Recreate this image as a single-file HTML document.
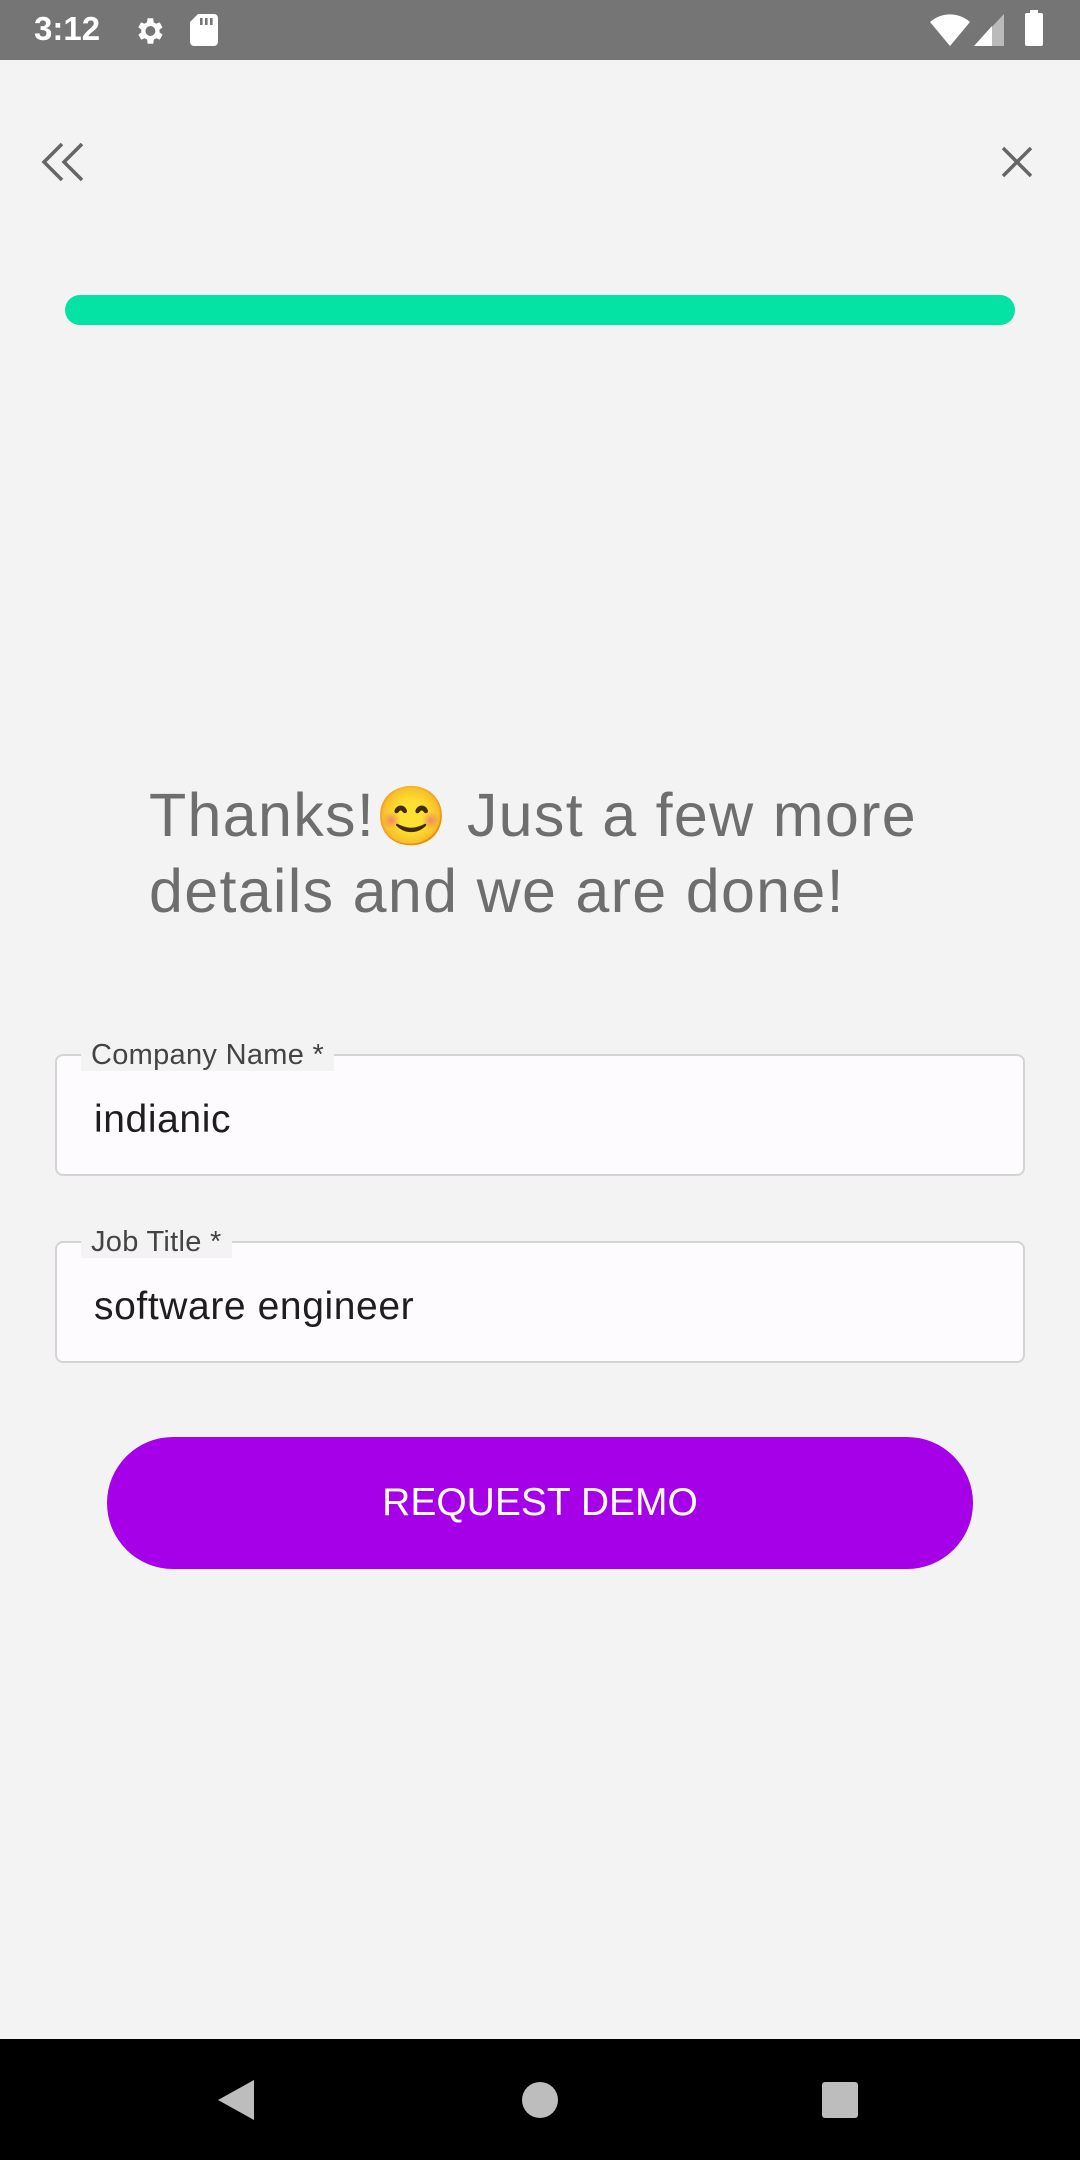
<!DOCTYPE html>
<html><head><meta charset="utf-8"><style>
*{margin:0;padding:0;box-sizing:border-box}
body{width:1080px;height:2160px;background:#f2f3f2;font-family:"Liberation Sans",Roboto,sans-serif;position:relative;overflow:hidden}
.sb{position:absolute;left:0;top:0;width:1080px;height:60px;background:#757575;color:#fff}
.abs{position:absolute}
.field{position:absolute;left:55px;width:970px;height:122px;border:2px solid #d4d4d4;border-radius:8px;background:#fdfbfd}
.lbl{position:absolute;top:-17px;left:24px;padding:0 10px;background:#f2f3f2;font-size:29px;color:#444;line-height:32px;letter-spacing:0.3px}
.val{position:absolute;left:37px;top:42px;font-size:39px;color:#1e1e1e;letter-spacing:0.6px}
</style></head><body>
<div class="sb">
 <div class="abs" style="left:34px;top:10px;font-size:33px;font-weight:bold">3:12</div>
 <svg class="abs" style="left:132px;top:14px" width="34" height="34" viewBox="0 0 24 24"><path fill="#fff" d="M19.4 13a7.5 7.5 0 0 0 0-2l2.1-1.6-2-3.5-2.5 1a7 7 0 0 0-1.7-1L15 3h-4l-.4 2.9a7 7 0 0 0-1.7 1l-2.5-1-2 3.5L6.6 11a7.5 7.5 0 0 0 0 2l-2.1 1.6 2 3.5 2.5-1a7 7 0 0 0 1.7 1L11 21h4l.4-2.9a7 7 0 0 0 1.7-1l2.5 1 2-3.5zM13 15.5a3.5 3.5 0 1 1 0-7 3.5 3.5 0 0 1 0 7z"/></svg>
 <svg class="abs" style="left:190px;top:14px" width="28" height="32" viewBox="0 0 14 16"><path fill="#fff" d="M4 0h8a2 2 0 0 1 2 2v12a2 2 0 0 1-2 2H2a2 2 0 0 1-2-2V4z"/><path fill="#757575" d="M5 2h1.3v3.5H5zM7.5 2h1.3v3.5H7.5zM10 2h1.3v3.5H10z"/></svg>
 <svg class="abs" style="left:930px;top:14px" width="40" height="32" viewBox="0 0 20 16"><path fill="#fff" d="M10 16L0 4a15 15 0 0 1 20 0z"/></svg>
 <svg class="abs" style="left:974px;top:14px" width="30" height="32" viewBox="0 0 15 16"><path fill="#fff" d="M15 0v16H0z" opacity=".5"/><path fill="#fff" d="M9 6v10H0z"/></svg>
 <div class="abs" style="left:1025px;top:13px;width:18px;height:33px;background:#fff;border-radius:2px"></div>
 <div class="abs" style="left:1030px;top:10px;width:8px;height:4px;background:#fff"></div>
</div>
<svg class="abs" style="left:40px;top:142px" width="46" height="40" viewBox="0 0 46 40"><path d="M22 2L4 20l18 18M42 2L24 20l18 18" fill="none" stroke="#666" stroke-width="3.5"/></svg>
<svg class="abs" style="left:1001px;top:146px" width="32" height="32" viewBox="0 0 32 32"><path d="M2 2l28 28M30 2L2 30" stroke="#666" stroke-width="3.5"/></svg>
<div class="abs" style="left:65px;top:295px;width:950px;height:30px;border-radius:15px;background:#05e3a4"></div>
<div class="abs" style="left:149px;top:778px;font-size:61px;line-height:74px;color:#6e6e6e;width:950px;letter-spacing:1.3px">Thanks!<span style="font-family:'Noto Color Emoji',sans-serif;font-size:58px">😊</span> Just a few more<br>details and we are done!</div>
<div class="field" style="top:1054px"><div class="lbl">Company Name *</div><div class="val">indianic</div></div>
<div class="field" style="top:1241px"><div class="lbl">Job Title *</div><div class="val">software engineer</div></div>
<div class="abs" style="left:107px;top:1437px;width:866px;height:132px;border-radius:66px;background:#a600e8;color:#fff;font-size:39px;text-align:center;line-height:132px">REQUEST DEMO</div>
<div class="abs" style="left:0;top:2039px;width:1080px;height:121px;background:#000">
 <svg class="abs" style="left:218px;top:41px" width="36" height="40" viewBox="0 0 36 40"><path d="M36 0v40L0 20z" fill="#bdbdbd"/></svg>
 <div class="abs" style="left:522px;top:43px;width:36px;height:36px;border-radius:50%;background:#bdbdbd"></div>
 <div class="abs" style="left:822px;top:43px;width:36px;height:36px;border-radius:3px;background:#bdbdbd"></div>
</div>
</body></html>
